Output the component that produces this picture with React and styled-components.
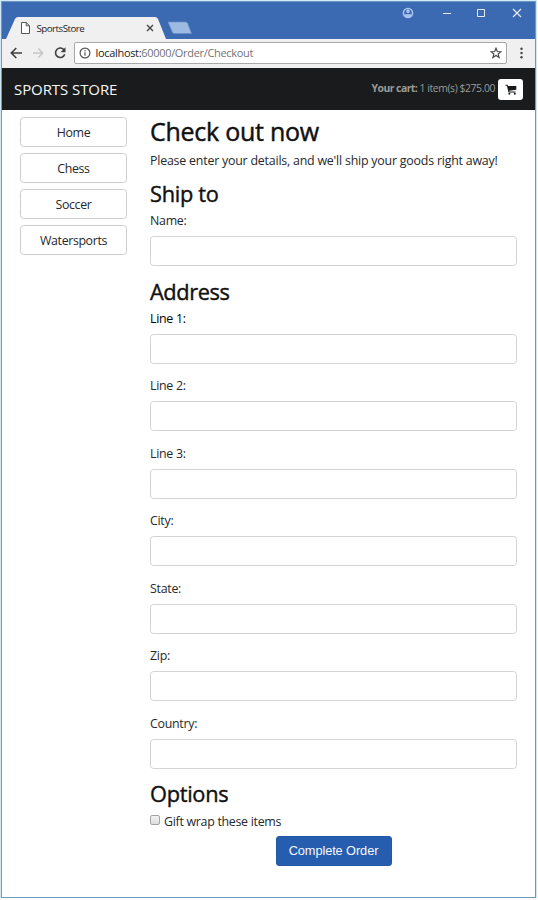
import React from "react";
import styled, { createGlobalStyle } from "styled-components";

const GlobalStyle = createGlobalStyle`
  *, *::before, *::after { box-sizing: border-box; }
  body {
    margin: 0;
    background: #fff;
    color: #26282b;
    font-family: "Open Sans", "Noto Sans", sans-serif;
    font-size: 12.4px;
  }
`;

const Window = styled.div`
  display: flex;
  flex-direction: column;
  width: 535px;
  height: 897px;
  margin: 1px 0 0 1px;
  border: 1px solid #6d9abf;
  box-shadow: 0 0 0 1px #d3e8f5;
  background: #fff;
`;

const TitleBar = styled.header`
  display: flex;
  align-items: flex-end;
  flex: none;
  height: 37px;
  background: #3c6ab2;
`;

const Tab = styled.div`
  display: grid;
  grid-template: 22px / 165px;
  > * { grid-area: 1 / 1; }
`;

const TabShape = styled.svg`
  display: block;
  width: 165px;
  height: 22px;
`;

const TabContent = styled.div`
  display: flex;
  align-items: center;
  z-index: 1;
  padding: 0 13px 0 19px;
`;

const TabTitle = styled.span`
  flex: 1;
  margin-left: 6.5px;
  color: #1d1d1d;
  font-size: 9.7px;
  letter-spacing: -0.49px;
`;

const NewTab = styled.svg`
  width: 27px;
  height: 14px;
  margin: 0 0 4px -1px;
`;

const WindowControls = styled.div`
  display: flex;
  align-self: flex-start;
  gap: 24px;
  margin: 5px 12px 0 auto;
  svg { display: block; width: 12px; height: 12px; }
  svg:nth-child(1) { margin-right: 3px; }
  svg:nth-child(2) { margin-right: -2px; }
`;

const Toolbar = styled.div`
  display: flex;
  align-items: center;
  flex: none;
  height: 29px;
  padding: 0 8px 1px 7px;
  background: #f1f0f1;
`;

const NavIcons = styled.div`
  display: flex;
  gap: 8px;
  svg { display: block; width: 14px; height: 14px; }
`;

const AddressBar = styled.div`
  display: flex;
  align-items: center;
  flex: 1;
  height: 22px;
  margin: 0 9px 0 7px;
  padding: 0 4px;
  border: 1px solid #a9a9a9;
  border-radius: 2px;
  background: #fff;
`;

const Url = styled.span`
  flex: 1;
  margin-left: 4.5px;
  color: #747474;
  font-size: 11px;
  line-height: 18px;
  letter-spacing: -0.32px;
  b { color: #1c1c1c; font-weight: 400; }
`;

const StoreHeader = styled.div`
  display: flex;
  align-items: center;
  flex: none;
  height: 42px;
  padding: 0 12px;
  background: #191b1c;
`;

const Brand = styled.span`
  flex: 1;
  color: #f7f7f7;
  font-size: 15px;
  letter-spacing: -0.08px;
`;

const CartSummary = styled.span`
  margin-right: 3px;
  padding-bottom: 2px;
  color: #9b9b9b;
  font-size: 10.4px;
  letter-spacing: -0.42px;
  white-space: pre;
  b { letter-spacing: -0.52px; }
`;

const CartButton = styled.button`
  display: flex;
  align-items: center;
  justify-content: center;
  width: 25px;
  height: 21px;
  padding: 0;
  border: 0;
  border-radius: 3px;
  background: #fff;
`;

const Page = styled.div`
  display: flex;
  flex: 1;
  padding: 7px 18px 0;
`;

const Sidebar = styled.nav`
  display: flex;
  flex-direction: column;
  gap: 6px;
  width: 107px;
  margin-right: 23px;
`;

const CategoryLink = styled.a`
  display: flex;
  align-items: center;
  justify-content: center;
  height: 30px;
  border: 1px solid #cdcdcd;
  border-radius: 3.5px;
  letter-spacing: -0.38px;
`;

const Form = styled.form`
  flex: 1;
  min-width: 0;
`;

const Title = styled.h1`
  margin: 0 0 3px;
  color: #111;
  font-size: 25px;
  font-weight: 500;
  line-height: 29px;
  letter-spacing: -0.25px;
  -webkit-text-stroke: 0.45px currentColor;
`;

const Intro = styled.p`
  margin: 0 0 8px;
  line-height: 23px;
  letter-spacing: -0.21px;
  white-space: nowrap;
`;

const SectionTitle = styled.h2`
  margin: 0 0 3px;
  color: #111;
  font-size: 21.8px;
  font-weight: 500;
  line-height: 27px;
  letter-spacing: ${(p) => p.$tracking ?? -0.3}px;
  -webkit-text-stroke: 0.4px currentColor;
`;

const Field = styled.label`
  display: block;
  margin-bottom: 11.5px;
  line-height: 22px;
  letter-spacing: -0.28px;
  color: ${(p) => (p.$strong ? "#000" : "inherit")};
`;

const Input = styled.input`
  display: block;
  width: 367px;
  height: 30px;
  margin-top: 4px;
  border: 1px solid #d2d3d4;
  border-radius: 3.5px;
  background: #fff;
  outline: none;
`;

const CheckRow = styled.label`
  display: flex;
  align-items: center;
  height: 22px;
  letter-spacing: -0.29px;
`;

const Checkbox = styled.input`
  appearance: none;
  width: 10px;
  height: 10px;
  margin: -3px 4px 0 0;
  border: 1px solid #a5a5a5;
  border-radius: 2px;
  background: linear-gradient(#f3f3f3, #dcdcdc);
`;

const Actions = styled.div`
  display: flex;
  justify-content: center;
  margin-top: 4px;
`;

const SubmitButton = styled.button`
  width: 116px;
  height: 30px;
  padding: 0 0 2px;
  border: 1px solid #2459a6;
  border-radius: 3px;
  background: #275dae;
  color: #f6f8fc;
  font: 12.8px "Liberation Sans", Arial, sans-serif;
  letter-spacing: -0.1px;
`;

const categories = ["Home", "Chess", "Soccer", "Watersports"];
const addressFields = ["Line 1", "Line 2", "Line 3", "City", "State", "Zip", "Country"];

function BrowserChrome() {
  return (
    <>
      <TitleBar>
        <Tab>
          <TabShape viewBox="0 0 165 22">
            <path d="M4 22 L13 2 Q14 0 16 0 H153 Q155 0 156 2 L164 22 Z" fill="#f1f0f1" />
          </TabShape>
          <TabContent>
            <svg width="9" height="12" viewBox="0 0 9 12" fill="#fff" stroke="#555" strokeWidth="1">
              <path d="M.5 .5H5.2L8.5 3.8V11.5H.5Z M5.2 .5V3.8H8.5" />
            </svg>
            <TabTitle>SportsStore</TabTitle>
            <svg width="8" height="8" viewBox="0 0 8 8" stroke="#444" strokeWidth="1.4">
              <path d="M1 1L7 7M7 1L1 7" />
            </svg>
          </TabContent>
        </Tab>
        <NewTab viewBox="0 0 27 14">
          <path d="M2 1H19.5Q21 1 21.6 2.3L25.5 12.5H8.5Q7 12.5 6.3 11Z" fill="#9dbbe0" stroke="#6b8fc6" strokeWidth=".7" />
        </NewTab>
        <WindowControls>
          <svg viewBox="0 0 12 12" fill="none" stroke="#a8c4f1">
            <circle cx="6" cy="6" r="4.6" strokeWidth="1.5" />
            <circle cx="6" cy="4.4" r="1.8" fill="#a8c4f1" stroke="none" />
            <path d="M2 7.2H10Q9.3 10.6 6 10.7Q2.7 10.6 2 7.2Z" fill="#a8c4f1" stroke="none" />
          </svg>
          <svg viewBox="0 0 12 12" stroke="#e4edfa"><path d="M2 6.5H10" /></svg>
          <svg viewBox="0 0 12 12" fill="none" stroke="#e4edfa"><path d="M2.5 2.5H9.5V9.5H2.5Z" /></svg>
          <svg viewBox="0 0 12 12" stroke="#e4edfa" strokeWidth="1.2"><path d="M2 2L10 10M10 2L2 10" /></svg>
        </WindowControls>
      </TitleBar>
      <Toolbar>
        <NavIcons>
          <svg viewBox="0 0 14 14" fill="none" stroke="#3f3f3f" strokeWidth="1.6"><path d="M13 7H2.5M7.3 2L2.3 7L7.3 12" /></svg>
          <svg viewBox="0 0 14 14" fill="none" stroke="#c6c6c6" strokeWidth="1.4"><path d="M2 7H12M7.3 2.5L11.8 7L7.3 11.5" /></svg>
          <svg viewBox="0 0 14 14" fill="none" stroke="#3f3f3f" strokeWidth="1.6">
            <path d="M11.2 4.2A4.7 4.7 0 1 0 11.7 8.2" />
            <path d="M12.5 1.3V6.2H7.6Z" fill="#3f3f3f" stroke="none" />
          </svg>
        </NavIcons>
        <AddressBar>
          <svg width="12" height="12" viewBox="0 0 12 12" fill="none" stroke="#555" strokeWidth="1.2">
            <circle cx="6" cy="6" r="4.9" />
            <path d="M6 5.3V8.8M6 3.1V4.3" />
          </svg>
          <Url><b>localhost:</b>60000/Order/Checkout</Url>
          <svg width="12" height="12" viewBox="0 0 12 12" fill="none" stroke="#444" strokeWidth="1.1">
            <path d="M6 1.2L7.3 4.5L10.9 4.7L8.1 7L9.1 10.5L6 8.5L2.9 10.5L3.9 7L1.1 4.7L4.7 4.5Z" />
          </svg>
        </AddressBar>
        <svg width="11" height="12" viewBox="0 0 11 12" fill="#444">
          <circle cx="5.5" cy="1.8" r="1.2" />
          <circle cx="5.5" cy="6" r="1.2" />
          <circle cx="5.5" cy="10.2" r="1.2" />
        </svg>
      </Toolbar>
    </>
  );
}

export default function App() {
  return (
    <>
      <GlobalStyle />
      <Window>
        <BrowserChrome />
        <StoreHeader>
          <Brand>SPORTS STORE</Brand>
          <CartSummary><b>Your cart:</b> 1 item(s) $275.00</CartSummary>
          <CartButton type="button" aria-label="Cart">
            <svg width="12" height="11" viewBox="0 0 12 11" fill="#17191a">
              <path d="M.5 .7H2.6L3 2H11.3V5.8L4.2 6.7L4.4 7.5H10.6V8.5H3.5L1.9 1.8H.5Z" />
              <circle cx="4.4" cy="9.8" r="1" />
              <circle cx="9.8" cy="9.8" r="1" />
            </svg>
          </CartButton>
        </StoreHeader>
        <Page>
          <Sidebar>
            {categories.map((name) => <CategoryLink key={name}>{name}</CategoryLink>)}
          </Sidebar>
          <Form>
            <Title>Check out now</Title>
            <Intro>Please enter your details, and we'll ship your goods right away!</Intro>
            <SectionTitle>Ship to</SectionTitle>
            <Field>Name:<Input /></Field>
            <SectionTitle $tracking={-0.42}>Address</SectionTitle>
            {addressFields.map((name, i) => (
              <Field key={name} $strong={i === 0}>{name}:<Input /></Field>
            ))}
            <SectionTitle>Options</SectionTitle>
            <CheckRow><Checkbox type="checkbox" />Gift wrap these items</CheckRow>
            <Actions><SubmitButton type="button">Complete Order</SubmitButton></Actions>
          </Form>
        </Page>
      </Window>
    </>
  );
}
